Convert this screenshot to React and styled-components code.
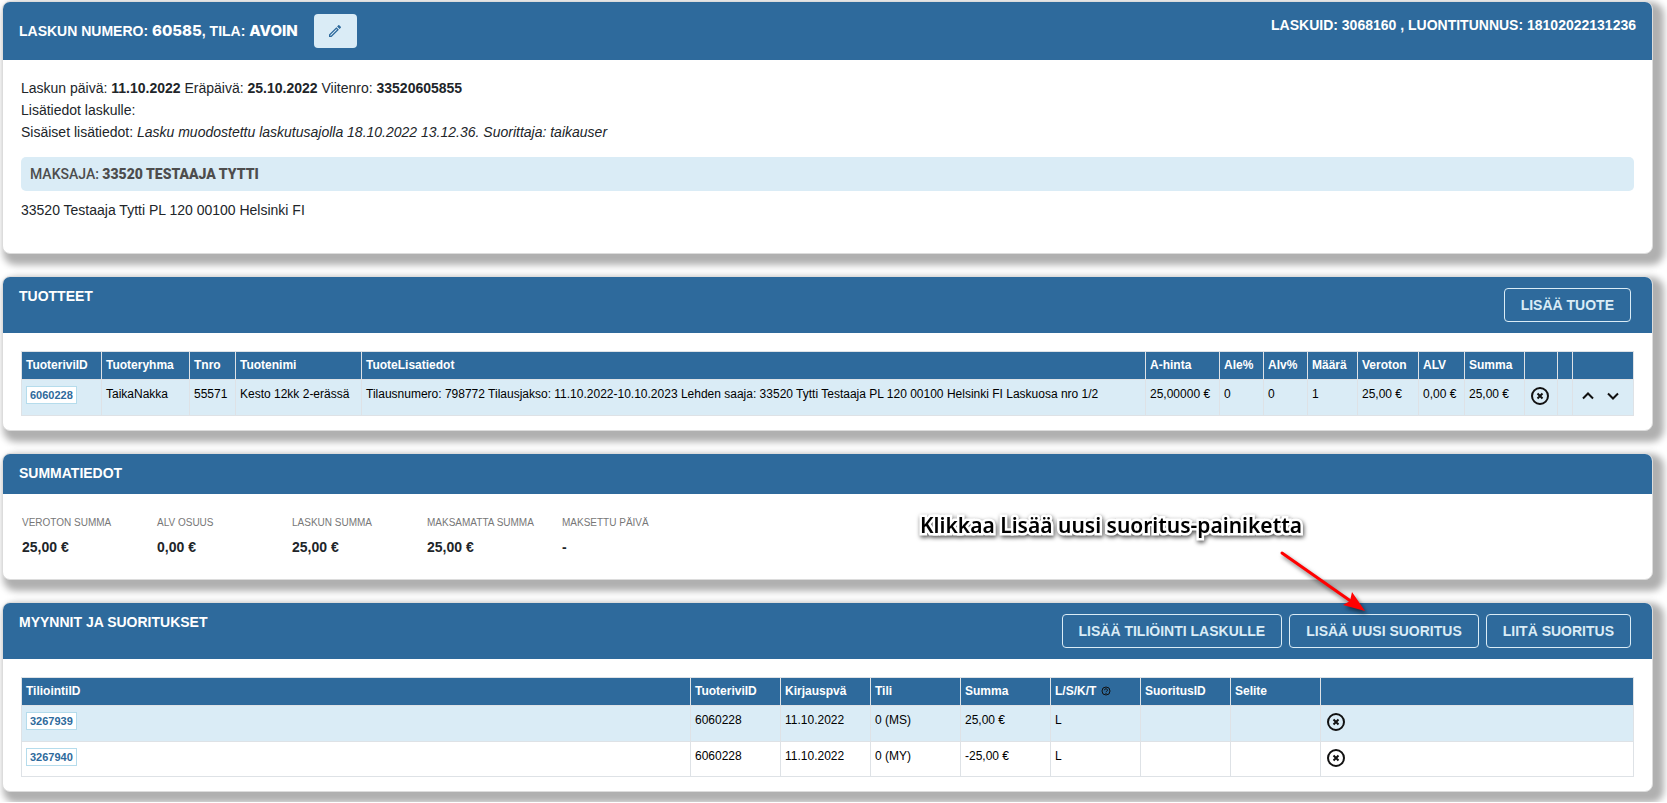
import React from "react";
import styled, { createGlobalStyle } from "styled-components";

const BLUE = "#2e6a9c";
const PALE = "#daecf6";
const LINE = "#dee2e6";

const GlobalStyle = createGlobalStyle`
  *, *::before, *::after { box-sizing: border-box; }
  body {
    margin: 0;
    background: #fff;
    color: #212529;
    font-family: "Liberation Sans", Arial, sans-serif;
    font-size: 14px;
    line-height: 22px;
  }
`;

const Page = styled.main`
  display: flex;
  flex-direction: column;
  gap: 22px;
  padding: 1px 14px 10px 2px;
  overflow: hidden;
`;

const Card = styled.section`
  position: relative;
  border: 1px solid #dcdcdc;
  border-radius: 8px;
  background: #fff;
  box-shadow: 6px 6px 7px 5px #b0b0b0;
`;

const CardHeader = styled.header`
  display: flex;
  justify-content: space-between;
  align-items: flex-start;
  padding: ${(p) => (p.$large ? "12px 16px" : "10px 21px 10px 16px")};
  min-height: ${(p) => (p.$large ? "58px" : "40px")};
  border-radius: 7px 7px 0 0;
  background: ${BLUE};
  color: #fff;
`;

const Title = styled.h2`
  display: flex;
  align-items: center;
  gap: 16px;
  margin: 0;
  font-size: 14px;
  line-height: ${(p) => (p.$large ? "34px" : "18px")};
  font-weight: 700;
`;

const Heavy = styled.strong`
  font-family: Inter, "Liberation Sans", sans-serif;
  font-size: 15px;
  font-weight: 800;
`;

const Meta = styled.p`
  margin: 0;
  font-weight: 700;
`;

const EditButton = styled.button`
  display: flex;
  align-items: center;
  justify-content: center;
  width: 43px;
  height: 34px;
  padding: 0;
  border: 0;
  border-radius: 4px;
  background: ${PALE};
  color: ${BLUE};
`;

const Actions = styled.div`
  display: flex;
  gap: 7px;
  padding: 1px 0;
`;

const OutlineButton = styled.button`
  height: 34px;
  padding: 0 16px;
  border: 1px solid ${PALE};
  border-radius: 4px;
  background: transparent;
  color: ${PALE};
  font: 700 14px/20px "Liberation Sans", Arial, sans-serif;
  white-space: nowrap;
`;

const InvoiceBody = styled.div`
  padding: 17px 18px 32px;
`;

const Line = styled.p`
  margin: 0;
`;

const PayerBar = styled.h3`
  margin: 14px 0 8px;
  padding: 0 9px;
  border-radius: 5px;
  background: ${PALE};
  color: #4d4d4d;
  font: 500 14px/34px Roboto, "Liberation Sans", sans-serif;
`;

const PayerName = styled.strong`
  font-weight: 900;
`;

const TableBody = styled.div`
  padding: 18px 18px 14px;
`;

const DataTable = styled.table`
  width: 100%;
  table-layout: fixed;
  border-collapse: collapse;
  color: #000;
  font-size: 12px;
  line-height: 16px;

  th, td {
    padding: 5px 0 0 4px;
    border: 1px solid ${LINE};
    text-align: left;
    vertical-align: top;
    white-space: nowrap;
  }
  th {
    height: 28px;
    background: ${BLUE};
    color: #fff;
  }
  td { height: 35px; padding-top: 6px; }
  tbody tr:first-child td { height: 36px; }
  tbody tr:nth-child(odd) { background: ${PALE}; }
`;

const IdLink = styled.a`
  display: inline-block;
  padding: 0 3px;
  border: 1px solid #b5dcec;
  background: #fff;
  color: ${BLUE};
  font-size: 11px;
  font-weight: 700;
  line-height: 16px;
  text-decoration: none;
`;

const IconButton = styled.button`
  display: inline-flex;
  padding: 0;
  border: 0;
  background: transparent;
  color: #111;
`;

const MoveButtons = styled.div`
  display: flex;
  gap: 5px;
  padding-left: 1px;
`;

const HelpMark = styled.svg`
  color: #111;
  vertical-align: middle;
`;

const Summary = styled.dl`
  display: flex;
  margin: 0;
  padding: 20px 18px 20px 19px;
`;

const SummaryItem = styled.div`
  width: 135px;
`;

const SummaryLabel = styled.dt`
  color: #777;
  font-size: 10px;
  line-height: 18px;
`;

const SummaryValue = styled.dd`
  margin: 3px 0 0;
  font-weight: 700;
  line-height: 24px;
`;

const Callout = styled.p`
  position: absolute;
  right: 350px;
  top: -92px;
  margin: 0;
  color: #000;
  font: 600 21px/28px "Noto Sans", "Open Sans", sans-serif;
  white-space: nowrap;
  paint-order: stroke fill;
  -webkit-text-stroke: 5px #fff;
  filter: drop-shadow(1px 2px 2px #555);
`;

const Arrow = styled.svg`
  position: absolute;
  right: 286px;
  top: -57px;
  overflow: visible;
  pointer-events: none;
  filter: drop-shadow(2px 3px 2px rgba(0, 0, 0, 0.55));
`;

function Pencil() {
  return (
    <svg width="16" height="16" viewBox="0 0 24 24" fill="currentColor" aria-hidden="true">
      <path d="M14.06 9.02l.92.92L5.92 19H5v-.92l9.06-9.06M17.66 3c-.25 0-.51.1-.7.29l-1.83 1.83 3.75 3.75 1.83-1.83a1 1 0 000-1.41l-2.34-2.34c-.2-.2-.45-.29-.71-.29M14.06 6.19L3 17.25V21h3.75L17.81 9.94l-3.75-3.75z" />
    </svg>
  );
}

function DeleteButton() {
  return (
    <IconButton type="button" aria-label="Poista">
      <svg width="22" height="20" viewBox="0 0 22 20" fill="none" stroke="currentColor" strokeWidth="2">
        <circle cx="11" cy="10" r="8" />
        <path d="M8.5 7.5l5 5m0-5l-5 5" />
      </svg>
    </IconButton>
  );
}

function MoveButton({ label, d }) {
  return (
    <IconButton type="button" aria-label={label}>
      <svg width="20" height="20" viewBox="0 0 20 20" fill="none" stroke="currentColor" strokeWidth="2">
        <path d={d} />
      </svg>
    </IconButton>
  );
}

const productColumns = [
  ["TuoteriviID", 80], ["Tuoteryhma", 88], ["Tnro", 46], ["Tuotenimi", 126],
  ["TuoteLisatiedot", null], ["A-hinta", 74], ["Ale%", 44], ["Alv%", 44],
  ["Määrä", 50], ["Veroton", 61], ["ALV", 46], ["Summa", 60], ["", 33], ["", 15], ["", 61],
];

const product = [
  "TaikaNakka", "55571", "Kesto 12kk 2-erässä",
  "Tilausnumero: 798772 Tilausjakso: 11.10.2022-10.10.2023 Lehden saaja: 33520 Tytti Testaaja PL 120 00100 Helsinki FI Laskuosa nro 1/2",
  "25,00000 €", "0", "0", "1", "25,00 €", "0,00 €", "25,00 €",
];

const entryColumns = [
  ["TiliointiID", null], ["TuoteriviID", 90], ["Kirjauspvä", 90], ["Tili", 90],
  ["Summa", 90], ["L/S/K/T", 90], ["SuoritusID", 90], ["Selite", 90], ["", 313],
];

const entries = [
  ["3267939", "6060228", "11.10.2022", "0 (MS)", "25,00 €", "L", "", ""],
  ["3267940", "6060228", "11.10.2022", "0 (MY)", "-25,00 €", "L", "", ""],
];

const totals = [
  ["VEROTON SUMMA", "25,00 €"], ["ALV OSUUS", "0,00 €"], ["LASKUN SUMMA", "25,00 €"],
  ["MAKSAMATTA SUMMA", "25,00 €"], ["MAKSETTU PÄIVÄ", "-"],
];

const Col = styled.col`
  width: ${(p) => (p.$w ? `${p.$w}px` : "auto")};
`;

function TableHead({ columns }) {
  return (
    <>
      <colgroup>{columns.map(([, w], i) => <Col key={i} $w={w} />)}</colgroup>
      <thead>
        <tr>
          {columns.map(([name], i) => (
            <th key={i} scope="col">
              {name}
              {name === "L/S/K/T" && (
                <>
                  {" "}
                  <HelpMark width="11" height="12" viewBox="0 0 11 12" fill="none" stroke="currentColor" aria-label="Ohje">
                    <circle cx="6" cy="5" r="4" />
                    <path d="M4.6 4.2a1.4 1.4 0 1 1 2 1.2c-.4.2-.6.4-.6.8M6 7v1" />
                  </HelpMark>
                </>
              )}
            </th>
          ))}
        </tr>
      </thead>
    </>
  );
}

export default function App() {
  return (
    <>
      <GlobalStyle />
      <Page>
        <Card>
          <CardHeader $large>
            <Title $large>
              <span>LASKUN NUMERO: <Heavy>60585</Heavy>, TILA: <Heavy>AVOIN</Heavy></span>
              <EditButton type="button" aria-label="Muokkaa"><Pencil /></EditButton>
            </Title>
            <Meta>LASKUID: 3068160 , LUONTITUNNUS: 18102022131236</Meta>
          </CardHeader>
          <InvoiceBody>
            <Line>
              Laskun päivä: <b>11.10.2022</b> Eräpäivä: <b>25.10.2022</b> Viitenro: <b>33520605855</b>
            </Line>
            <Line>Lisätiedot laskulle:</Line>
            <Line>
              Sisäiset lisätiedot: <i>Lasku muodostettu laskutusajolla 18.10.2022 13.12.36. Suorittaja: taikauser</i>
            </Line>
            <PayerBar>MAKSAJA: <PayerName>33520 TESTAAJA TYTTI</PayerName></PayerBar>
            <Line>33520 Testaaja Tytti PL 120 00100 Helsinki FI</Line>
          </InvoiceBody>
        </Card>

        <Card>
          <CardHeader>
            <Title>TUOTTEET</Title>
            <Actions><OutlineButton type="button">LISÄÄ TUOTE</OutlineButton></Actions>
          </CardHeader>
          <TableBody>
            <DataTable>
              <TableHead columns={productColumns} />
              <tbody>
                <tr>
                  <td><IdLink href="#6060228">6060228</IdLink></td>
                  {product.map((value, i) => <td key={i}>{value}</td>)}
                  <td><DeleteButton /></td>
                  <td />
                  <td>
                    <MoveButtons>
                      <MoveButton label="Siirrä ylös" d="M5 12.5l5-5 5 5" />
                      <MoveButton label="Siirrä alas" d="M5 7.5l5 5 5-5" />
                    </MoveButtons>
                  </td>
                </tr>
              </tbody>
            </DataTable>
          </TableBody>
        </Card>

        <Card>
          <CardHeader><Title>SUMMATIEDOT</Title></CardHeader>
          <Summary>
            {totals.map(([label, value]) => (
              <SummaryItem key={label}>
                <SummaryLabel>{label}</SummaryLabel>
                <SummaryValue>{value}</SummaryValue>
              </SummaryItem>
            ))}
          </Summary>
        </Card>

        <Card>
          <CardHeader>
            <Title>MYYNNIT JA SUORITUKSET</Title>
            <Actions>
              <OutlineButton type="button">LISÄÄ TILIÖINTI LASKULLE</OutlineButton>
              <OutlineButton type="button">LISÄÄ UUSI SUORITUS</OutlineButton>
              <OutlineButton type="button">LIITÄ SUORITUS</OutlineButton>
            </Actions>
          </CardHeader>
          <TableBody>
            <DataTable>
              <TableHead columns={entryColumns} />
              <tbody>
                {entries.map(([id, ...values]) => (
                  <tr key={id}>
                    <td><IdLink href={`#${id}`}>{id}</IdLink></td>
                    {values.map((value, i) => <td key={i}>{value}</td>)}
                    <td><DeleteButton /></td>
                  </tr>
                ))}
              </tbody>
            </DataTable>
          </TableBody>
          <Callout>Klikkaa Lisää uusi suoritus-painiketta</Callout>
          <Arrow width="92" height="68" viewBox="0 0 92 68" aria-hidden="true">
            <path d="M8 7L78 56" stroke="#f00" strokeWidth="3" strokeLinecap="round" />
            <path d="M91 65L69 59L76 55L78 46Z" fill="#f00" />
          </Arrow>
        </Card>
      </Page>
    </>
  );
}
